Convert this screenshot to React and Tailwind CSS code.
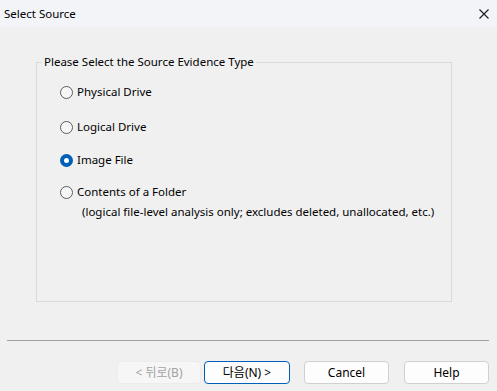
export default function App() {
  const font = { fontFamily: '"Noto Sans", "Noto Sans CJK KR", sans-serif' };

  const Radio = ({ checked }) =>
    checked ? (
      <span className="flex h-[13px] w-[13px] shrink-0 items-center justify-center rounded-full bg-[#005fb8]">
        <span className="h-[5px] w-[5px] rounded-full bg-white" />
      </span>
    ) : (
      <span className="h-[13px] w-[13px] shrink-0 rounded-full border border-[#5c5c5c] bg-[#f7f7f7]" />
    );

  const Option = ({ label, checked, className }) => (
    <div className={`flex h-[16px] items-center gap-[4px] ${className}`}>
      <Radio checked={checked} />
      <span className="text-[11.5px] leading-none text-black">{label}</span>
    </div>
  );

  return (
    <div
      className="flex h-[391px] w-[497px] flex-col overflow-hidden bg-[#f0f0f0] text-black"
      style={font}
    >
      {/* title bar */}
      <div className="flex h-[27px] items-center justify-between bg-[#f3f4f8] pl-[4px] pr-[4px]">
        <span className="text-[11.5px]">Select Source</span>
        <svg width="12" height="12" viewBox="0 0 12 12" className="mr-[3px]">
          <path d="M1.5 1.5 L10.5 10.5 M10.5 1.5 L1.5 10.5" stroke="#1a1a1a" strokeWidth="1.1" />
        </svg>
      </div>

      {/* group box */}
      <fieldset className="ml-[36px] mt-[27px] h-[248px] w-[416px] border border-[#dadada]">
        <legend className="ml-[5px] px-[2px] text-[11.5px] leading-[16px]">
          Please Select the Source Evidence Type
        </legend>
        <div className="pl-[23px]">
          <Option label="Physical Drive" className="mt-[14px]" />
          <Option label="Logical Drive" className="mt-[19px]" />
          <Option label="Image File" checked className="mt-[17px]" />
          <Option label="Contents of a Folder" className="mt-[16px]" />
          <div className="ml-[22px] mt-[4px] text-[11.5px] leading-[16px]">
            (logical file-level analysis only; excludes deleted, unallocated, etc.)
          </div>
        </div>
      </fieldset>

      {/* separator */}
      <div className="ml-[7px] mt-[38px] h-px w-[482px] bg-[#a0a0a0]" />

      {/* buttons */}
      <div className="mt-[20px] flex pl-[117px] text-[12px]">
        <button className="h-[23px] w-[84px] rounded-[4px] border border-[#ececec] bg-[#f6f6f6] text-[#a2a2a2]">
          &lt; 뒤로(B)
        </button>
        <button className="ml-[3px] h-[23px] w-[86px] rounded-[4px] border border-[#005fb8] bg-[#fdfdfd]">
          다음(N) &gt;
        </button>
        <button className="ml-[14px] h-[23px] w-[85px] rounded-[4px] border border-[#d0d0d0] bg-[#fdfdfd]">
          Cancel
        </button>
        <button className="ml-[15px] h-[23px] w-[85px] rounded-[4px] border border-[#d0d0d0] bg-[#fdfdfd]">
          Help
        </button>
      </div>
    </div>
  );
}
